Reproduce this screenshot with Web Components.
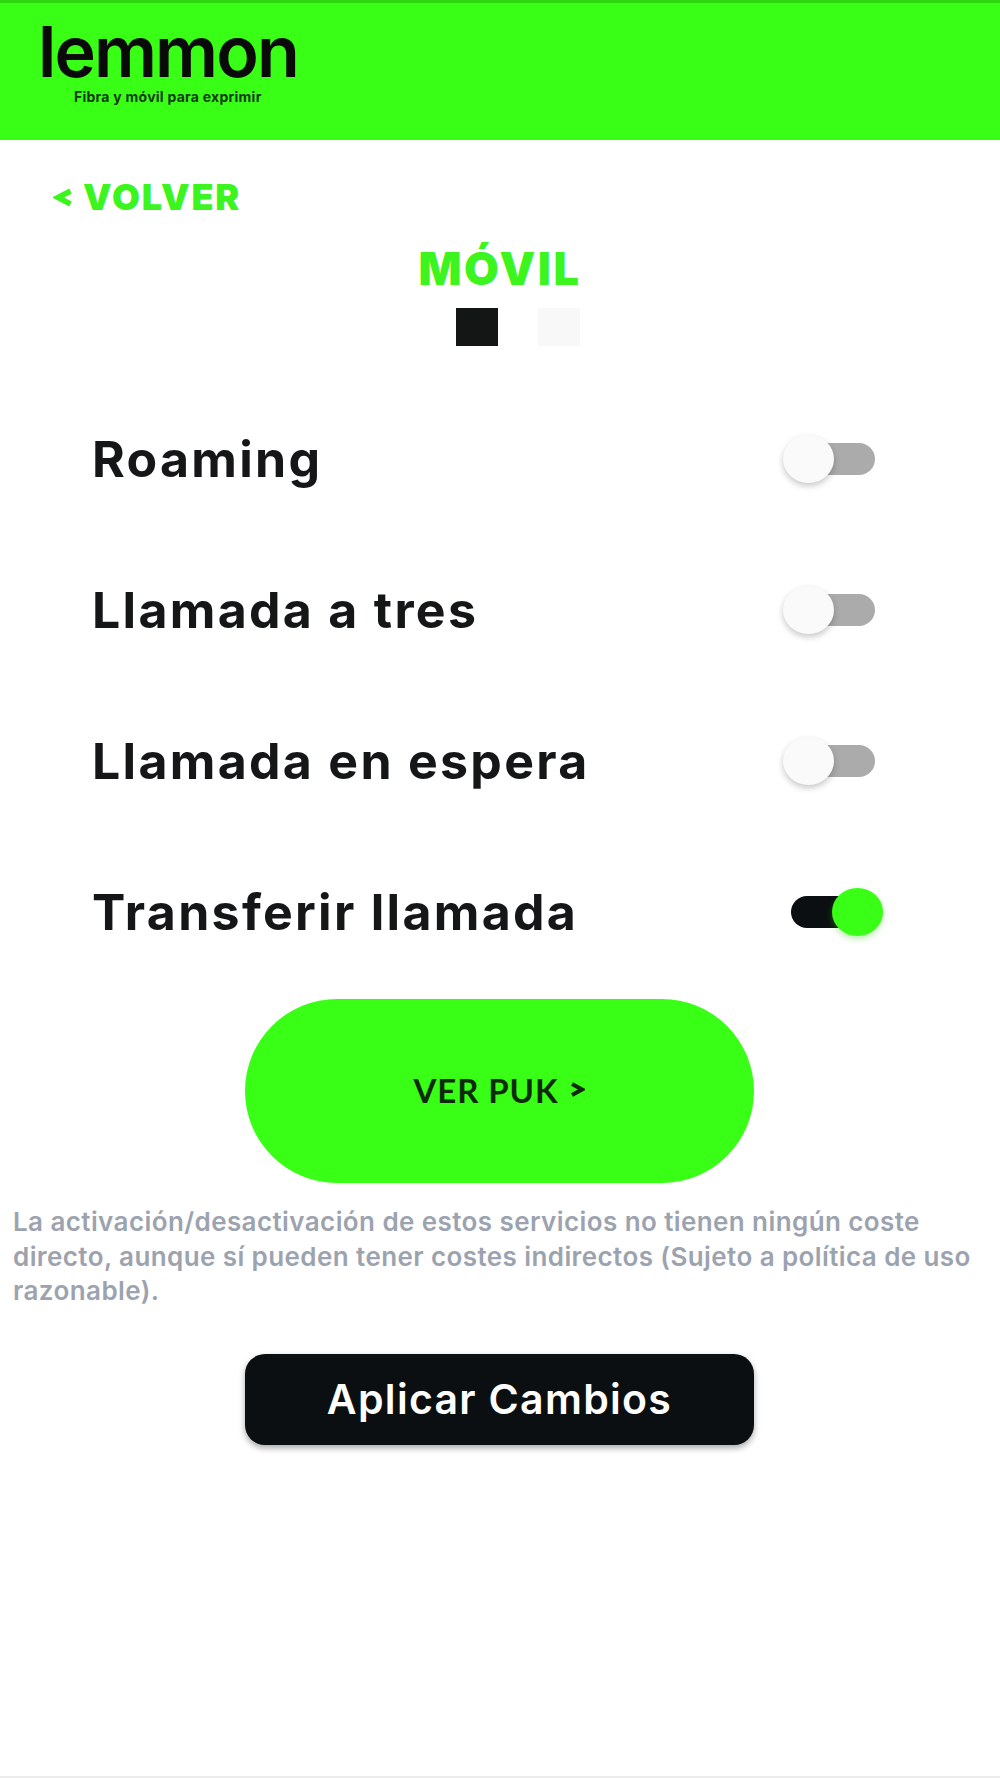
<!doctype html>
<html lang="es"><head><meta charset="utf-8"><title>Móvil</title>
<style>
html,body{margin:0;padding:0;background:#fff}
body{font-family:Inter,"Liberation Sans",sans-serif;color:#141618}
</style></head><body>
<app-page>
  <brand-header></brand-header>
  <back-link>VOLVER</back-link>
  <section-title>MÓVIL</section-title>
  <tab-dots></tab-dots>
  <settings-list>
    <setting-row>Roaming</setting-row>
    <setting-row>Llamada a tres</setting-row>
    <setting-row>Llamada en espera</setting-row>
    <setting-row on>Transferir llamada</setting-row>
  </settings-list>
  <pill-button>VER PUK</pill-button>
  <note-text>La activación/desactivación de estos servicios no tienen ningún coste directo, aunque sí pueden tener costes indirectos (Sujeto a política de uso razonable).</note-text>
  <apply-button>Aplicar Cambios</apply-button>
</app-page>
<script>
function def(name, css, html){
  customElements.define(name, class extends HTMLElement{
    constructor(){super();const r=this.attachShadow({mode:'open'});r.innerHTML='<style>'+css+'</style>'+html;}
  });
}
def('app-page',`:host{display:flex;flex-direction:column;min-height:1778px;box-sizing:border-box;border-bottom:2px solid #ececec;background:#fff}`,`<slot></slot>`);
def('brand-header',`
:host{display:block;background:#39ff17;border-top:3px solid #2fd612;padding:20px 0 0 38px;box-sizing:content-box;height:117px;color:#0a0a0a}
.logo{font:600 70px/58px Inter,sans-serif;letter-spacing:-1.9px;height:58px;white-space:nowrap}
.tag{font:700 14px/15px Inter,sans-serif;margin:8px 0 0 36px;letter-spacing:.25px;color:#123a0c;white-space:nowrap}
`,`<div class="logo">lemmon</div><div class="tag">Fibra y móvil para exprimir</div>`);
def('back-link',`
:host{display:flex;align-items:center;gap:11px;margin:44px 0 0 53px;height:26px;color:#3cf51f;font:900 36px/26px Inter,sans-serif;letter-spacing:1.9px}
svg{width:19px;height:19px;flex:none}
`,`<svg viewBox="0 0 19 19" aria-hidden="true"><path d="M17.5 3 L5 9.5 L17.5 16" fill="none" stroke="#3cf51f" stroke-width="5.6" stroke-linejoin="miter"/></svg><slot></slot>`);
def('section-title',`
:host{display:block;margin-top:34px;text-align:center;color:#3cf51f;font:900 45px/50px Inter,sans-serif;letter-spacing:2.6px}
`,`<slot></slot>`);
def('tab-dots',`
:host{display:flex;justify-content:center;gap:40px;margin-top:14px;padding-left:36px}
i{display:block;width:42px;height:38px}
.a{background:#141616}.b{background:#f8f8f8}
`,`<i class="a"></i><i class="b"></i>`);
def('settings-list',`:host{display:flex;flex-direction:column;margin-top:37px}`,`<slot></slot>`);
def('setting-row',`
:host{display:flex;align-items:center;justify-content:space-between;height:151px;padding:0 125px 0 92px;font:700 50px/56px Inter,sans-serif;color:#141618;letter-spacing:2.3px}
.sw{position:relative;display:block;width:75px;height:32px;border-radius:16px;background:#ababab;box-sizing:border-box}
.sw::before{content:"";position:absolute;left:-17px;top:-8px;width:51px;height:48px;border-radius:50%;background:#fafafa;box-shadow:0 3px 6px rgba(0,0,0,.22)}
:host([on]) .sw{background:#0b0f12;transform:translateX(-9px)}
:host([on]) .sw::before{left:41px;background:#39ff17;box-shadow:0 3px 6px rgba(57,200,23,.35)}
`,`<slot></slot><span class="sw"></span>`);
def('pill-button',`
:host{display:flex;align-items:center;justify-content:center;gap:12px;align-self:flex-start;box-sizing:border-box;width:509px;height:184px;margin:12px 0 0 245px;padding-bottom:3px;border-radius:92px;background:#39ff17;color:#0e2a0a;font:700 33px/40px Lato,sans-serif;letter-spacing:.9px}
svg{width:15px;height:15px;flex:none}
`,`<slot></slot><svg viewBox="0 0 15 15" aria-hidden="true"><path d="M2 2 L12 7.5 L2 13" fill="none" stroke="#0e2a0a" stroke-width="4"/></svg>`);
def('note-text',`
:host{display:block;margin:22px 0 0 13px;width:975px;color:#9ca3af;font:600 26px/34.5px Inter,sans-serif;letter-spacing:.41px}
`,`<slot></slot>`);
def('apply-button',`
:host{display:flex;align-items:center;justify-content:center;align-self:flex-start;box-sizing:border-box;width:509px;height:91px;margin:45px 0 0 245px;border-radius:20px;background:#0b0f12;color:#fff;font:600 41px/44px Inter,sans-serif;letter-spacing:1.3px;box-shadow:0 3px 6px rgba(0,0,0,.35)}
`,`<slot></slot>`);
</script>
</body></html>
